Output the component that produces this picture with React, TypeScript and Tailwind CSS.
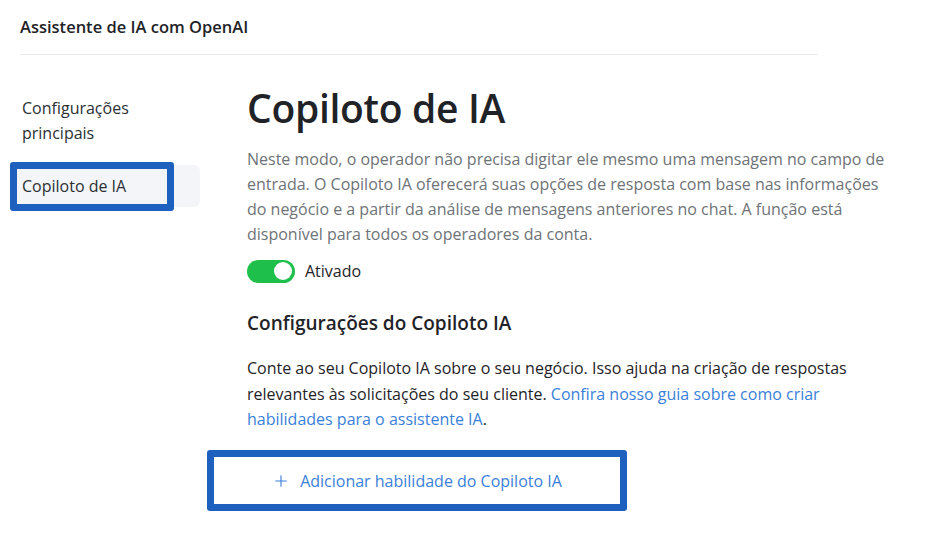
import { Plus } from "lucide-react";

const font = { fontFamily: '"Open Sans", "Noto Sans", sans-serif' };

export default function App() {
  return (
    <div className="h-[553px] w-[934px] overflow-hidden bg-white text-[#1f2328]" style={font}>
      {/* Header */}
      <div className="ml-5 w-[798px] border-b border-[#e8eaed] pt-[17px] pb-[17px]">
        <h1 className="text-[16.5px] font-semibold leading-5">Assistente de IA com OpenAI</h1>
      </div>

      <div className="flex">
        {/* Sidebar */}
        <nav className="w-[247px] shrink-0 pt-[41px] pl-[10px]">
          <div className="px-3 text-[16px] leading-[25px] text-[#2b2f33]">
            Configurações
            <br />
            principais
          </div>
          <div className="relative mt-[19px] w-[190px]">
            <div className="rounded-md bg-[#f3f5f8] px-3 py-[8px] text-[16px] leading-[26px] text-[#2b2f33]">
              Copiloto de IA
            </div>
            {/* annotation */}
            <div className="pointer-events-none absolute -top-[3px] left-0 h-[49px] w-[164px] rounded-[3px] border-[7px] border-[#1e60bd]" />
          </div>
        </nav>

        {/* Main */}
        <main className="flex-1 pr-4">
          <h2 className="mt-[30px] text-[39px] font-semibold leading-[46px] tracking-[-0.3px]">Copiloto de IA</h2>
          <p className="mt-[16px] w-[648px] text-[16px] leading-[25px] text-[#6e7377]">
            Neste modo, o operador não precisa digitar ele mesmo uma mensagem no campo de entrada. O Copiloto IA oferecerá
            suas opções de resposta com base nas informações do negócio e a partir da análise de mensagens anteriores no
            chat. A função está disponível para todos os operadores da conta.
          </p>

          <div className="mt-[12px] flex items-center gap-[10px]">
            <div className="flex h-[23px] w-[48px] items-center justify-end rounded-full bg-[#1fbf4c] px-[3px]">
              <div className="h-[18px] w-[18px] rounded-full bg-white" />
            </div>
            <span className="text-[16px] leading-6">Ativado</span>
          </div>

          <h3 className="mt-[26px] text-[19px] font-semibold leading-7">Configurações do Copiloto IA</h3>

          <p className="mt-[19px] w-[620px] text-[16px] leading-[25.5px] text-[#1f2328]">
            Conte ao seu Copiloto IA sobre o seu negócio. Isso ajuda na criação de respostas relevantes às solicitações do
            seu cliente.{" "}
            <a className="text-[#3b7fd9]" href="#">
              Confira nosso guia sobre como criar habilidades para o assistente IA
            </a>
            .
          </p>

          <div className="relative mt-[17px] -ml-[40px] w-[420px]">
            <button className="flex h-[61px] w-full items-center justify-center gap-[10px] bg-white pt-[2px] text-[16px] text-[#3b7fd9]">
              <Plus size={18} strokeWidth={1.5} />
              Adicionar habilidade do Copiloto IA
            </button>
            <div className="pointer-events-none absolute inset-0 rounded-[3px] border-[7px] border-[#1e60bd]" />
          </div>
        </main>
      </div>
    </div>
  );
}
